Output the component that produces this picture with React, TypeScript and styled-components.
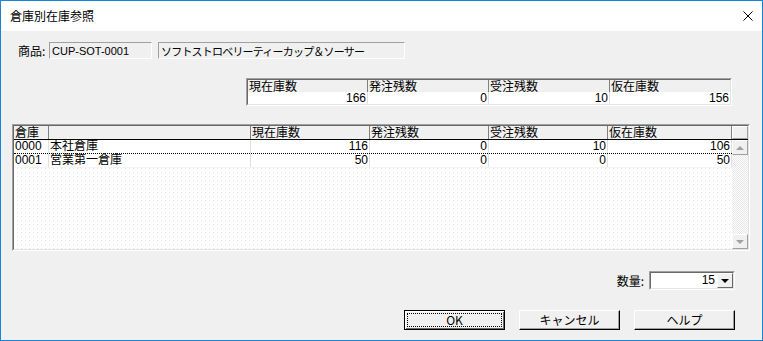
import React from 'react';
import styled, { createGlobalStyle } from 'styled-components';

interface StockRow {
  code: string;
  name: string;
  onHand: number;
  ordered: number;
  reserved: number;
  available: number;
}

const rows: StockRow[] = [
  { code: '0000', name: '本社倉庫', onHand: 116, ordered: 0, reserved: 10, available: 106 },
  { code: '0001', name: '営業第一倉庫', onHand: 50, ordered: 0, reserved: 0, available: 50 },
];

const summary = [
  { label: '現在庫数', value: 166 },
  { label: '発注残数', value: 0 },
  { label: '受注残数', value: 10 },
  { label: '仮在庫数', value: 156 },
];

const GlobalStyle = createGlobalStyle`
  html, body {
    margin: 0;
    padding: 0;
    background: #fff;
  }
  body {
    font-family: "Liberation Sans", "Noto Sans CJK JP", sans-serif;
    font-size: 12px;
    color: #000;
  }
  * {
    box-sizing: border-box;
  }
`;

const Window = styled.div`
  width: 763px;
  height: 341px;
  border: 1px solid #1883d7;
  display: flex;
  flex-direction: column;
  background: #f0f0f0;
  overflow: hidden;
`;

const TitleBar = styled.div`
  height: 30px;
  flex-shrink: 0;
  background: #fff;
  display: flex;
  align-items: center;
  justify-content: space-between;
  padding: 0 9px 0 9px;
`;

const Title = styled.span`
  font-family: "Noto Sans CJK JP", sans-serif;
  font-size: 12px;
  line-height: 14px;
`;

const Body = styled.div`
  flex: 1;
  display: flex;
  flex-direction: column;
  padding: 11px 11px 0 11px;
`;

const ProductRow = styled.div`
  display: flex;
  align-items: center;
  gap: 6px;
  padding-left: 6px;
  height: 17px;
`;

const Label = styled.span<{ $width?: number }>`
  width: ${p => (p.$width ? `${p.$width}px` : 'auto')};
  font-family: "Noto Sans CJK JP", sans-serif;
  font-size: 12px;
  line-height: 14px;
  white-space: nowrap;
`;

const ReadOnlyField = styled.div<{ $width: number; $cjk?: boolean }>`
  width: ${p => p.$width}px;
  height: 17px;
  border: 1px solid;
  border-color: #a0a0a0 #fff #fff #a0a0a0;
  padding: 0 2px;
  display: flex;
  align-items: center;
  font-family: ${p => (p.$cjk ? '"Noto Sans CJK JP", sans-serif' : '"Liberation Sans", sans-serif')};
  font-size: 11px;
  letter-spacing: ${p => (p.$cjk ? '-0.8px' : '0')};
  white-space: nowrap;
`;

const Sunken = styled.div<{ $width: number; $height: number; $left?: number; $top: number }>`
  width: ${p => p.$width}px;
  height: ${p => p.$height}px;
  margin-left: ${p => p.$left ?? 0}px;
  margin-top: ${p => p.$top}px;
  flex-shrink: 0;
  border: 1px solid;
  border-color: #a0a0a0 #fff #fff #a0a0a0;
  display: flex;
`;

const SunkenInner = styled.div`
  flex: 1;
  display: flex;
  flex-direction: column;
  border: 1px solid;
  border-color: #696969 #e3e3e3 #e3e3e3 #696969;
  background: #fff;
`;

const SummaryGrid = styled.div`
  display: grid;
  grid-template-columns: 120px 121px 121px 120px;
  grid-template-rows: 12px 12px;
  font-family: "Noto Sans CJK JP", sans-serif;
  line-height: 12px;
`;

const HeadCell = styled.div<{ $last?: boolean }>`
  background: #f0f0f0;
  border-right: ${p => (p.$last ? 'none' : '1px solid #808080')};
  padding-left: 1px;
  font-family: "Noto Sans CJK JP", sans-serif;
  font-size: 12px;
  line-height: 12px;
  white-space: nowrap;
`;

const NumCell = styled.div<{ $last?: boolean }>`
  background: #fff;
  border-right: ${p => (p.$last ? 'none' : '1px solid #e0e0e0')};
  padding-right: 1px;
  text-align: right;
  font-family: "Liberation Sans", sans-serif;
  font-size: 12px;
  line-height: 12px;
`;

const TextCell = styled.div`
  background: #fff;
  border-right: 1px solid #e0e0e0;
  padding-left: 1px;
  font-family: "Liberation Sans", "Noto Sans CJK JP", sans-serif;
  font-size: 12px;
  line-height: 12px;
  white-space: nowrap;
`;

const cols = '35px 202px 119px 119px 119px 124px';

const GridHeader = styled.div`
  display: grid;
  grid-template-columns: ${cols} 16px;
  height: 14px;
  border-bottom: 1px solid #000;
`;

const ScrollCorner = styled.div`
  background: #f0f0f0;
  border: 1px solid;
  border-color: #fff #a0a0a0 #a0a0a0 #fff;
`;

const GridBody = styled.div`
  flex: 1;
  display: flex;
  min-height: 0;
`;

const RowsArea = styled.div`
  flex: 1;
  display: flex;
  flex-direction: column;
  background:
    linear-gradient(90deg, #fff 75%, transparent 75%) 0 0 / 4px 4px,
    linear-gradient(#e2e2e2 25%, #fff 25%) 0 0 / 4px 4px;
`;

const DataRow = styled.div<{ $focused?: boolean }>`
  display: grid;
  grid-template-columns: ${cols};
  height: 14px;
  align-items: end;
  border-bottom: 1px ${p => (p.$focused ? 'dotted #000' : 'solid #f4f4f4')};
  & > div {
    height: 13px;
  }
`;

const ScrollBar = styled.div`
  width: 16px;
  display: flex;
  flex-direction: column;
  background: repeating-conic-gradient(#fff 0 25%, #e6e6e6 0 50%) 0 0 / 2px 2px;
`;

const ScrollButton = styled.div`
  height: 15px;
  background: #f0f0f0;
  border: 1px solid;
  border-color: #fff #a0a0a0 #a0a0a0 #fff;
  display: flex;
  align-items: center;
  justify-content: center;
`;

const ScrollTrack = styled.div`
  flex: 1;
`;

const Arrow = styled.div<{ $up?: boolean; $color: string }>`
  width: 0;
  height: 0;
  border-left: 4px solid transparent;
  border-right: 4px solid transparent;
  ${p =>
    p.$up
      ? `border-bottom: 4px solid ${p.$color};`
      : `border-top: 4px solid ${p.$color};`}
`;

const QtyRow = styled.div`
  margin-top: 20px;
  display: flex;
  justify-content: flex-end;
  align-items: center;
  gap: 5px;
  padding-right: 16px;
`;

const Combo = styled.div`
  width: 86px;
  height: 19px;
  border: 1px solid;
  border-color: #a0a0a0 #fff #fff #a0a0a0;
  display: flex;
`;

const ComboInner = styled.div`
  flex: 1;
  display: flex;
  background: #fff;
  border: 1px solid;
  border-color: #696969 #e3e3e3 #e3e3e3 #696969;
`;

const ComboValue = styled.div`
  flex: 1;
  text-align: right;
  padding-right: 2px;
  font-family: "Liberation Sans", sans-serif;
  font-size: 12px;
  line-height: 15px;
`;

const ComboButton = styled.div`
  width: 16px;
  background: #f0f0f0;
  border: 1px solid;
  border-color: #fff #696969 #696969 #fff;
  display: flex;
  align-items: center;
  justify-content: center;
`;

const ButtonRow = styled.div`
  margin-top: 20px;
  display: flex;
  justify-content: flex-end;
  gap: 14px;
  padding-right: 16px;
`;

const Button = styled.button<{ $default?: boolean }>`
  width: 101px;
  height: 20px;
  padding: 2px;
  margin: 0;
  display: flex;
  background: #f0f0f0;
  border: 1px solid;
  border-color: ${p => (p.$default ? '#000' : '#fff #000 #000 #fff')};
  box-shadow: ${p =>
    p.$default
      ? 'inset 1px 1px #fff, inset -1px -1px #696969'
      : 'inset -1px -1px #a0a0a0'};
  font-family: "Noto Sans CJK JP", sans-serif;
  font-size: 12px;
  color: #000;
`;

const ButtonFace = styled.span<{ $focus?: boolean }>`
  flex: 1;
  display: flex;
  align-items: center;
  justify-content: center;
  border: 1px ${p => (p.$focus ? 'dotted #000' : 'solid transparent')};
  line-height: 12px;
`;

const CloseIcon = () => (
  <svg width="10" height="10" viewBox="0 0 10 10">
    <path d="M0.5 0.5 L9.5 9.5 M9.5 0.5 L0.5 9.5" stroke="#000" strokeWidth="1" />
  </svg>
);

export default function App() {
  return (
    <>
      <GlobalStyle />
      <Window>
        <TitleBar>
          <Title>倉庫別在庫参照</Title>
          <CloseIcon />
        </TitleBar>
        <Body>
          <ProductRow>
            <Label $width={25}>商品:</Label>
            <ReadOnlyField $width={103}>CUP-SOT-0001</ReadOnlyField>
            <ReadOnlyField $width={247} $cjk>
              ソフトストロベリーティーカップ＆ソーサー
            </ReadOnlyField>
          </ProductRow>

          <Sunken $width={486} $height={28} $left={234} $top={19}>
            <SunkenInner>
              <SummaryGrid>
                {summary.map((s, i) => (
                  <HeadCell key={s.label} $last={i === summary.length - 1}>
                    {s.label}
                  </HeadCell>
                ))}
                {summary.map((s, i) => (
                  <NumCell key={s.label} $last={i === summary.length - 1}>
                    {s.value}
                  </NumCell>
                ))}
              </SummaryGrid>
            </SunkenInner>
          </Sunken>

          <Sunken $width={738} $height={127} $top={18}>
            <SunkenInner>
              <GridHeader>
                <HeadCell>倉庫</HeadCell>
                <HeadCell />
                <HeadCell>現在庫数</HeadCell>
                <HeadCell>発注残数</HeadCell>
                <HeadCell>受注残数</HeadCell>
                <HeadCell>仮在庫数</HeadCell>
                <ScrollCorner />
              </GridHeader>
              <GridBody>
                <RowsArea>
                  {rows.map((r, i) => (
                    <DataRow key={r.code} $focused={i === 0}>
                      <TextCell>{r.code}</TextCell>
                      <TextCell>{r.name}</TextCell>
                      <NumCell>{r.onHand}</NumCell>
                      <NumCell>{r.ordered}</NumCell>
                      <NumCell>{r.reserved}</NumCell>
                      <NumCell>{r.available}</NumCell>
                    </DataRow>
                  ))}
                </RowsArea>
                <ScrollBar>
                  <ScrollButton>
                    <Arrow $up $color="#a0a0a0" />
                  </ScrollButton>
                  <ScrollTrack />
                  <ScrollButton>
                    <Arrow $color="#a0a0a0" />
                  </ScrollButton>
                </ScrollBar>
              </GridBody>
            </SunkenInner>
          </Sunken>

          <QtyRow>
            <Label>数量:</Label>
            <Combo>
              <ComboInner>
                <ComboValue>15</ComboValue>
                <ComboButton>
                  <Arrow $color="#000" />
                </ComboButton>
              </ComboInner>
            </Combo>
          </QtyRow>

          <ButtonRow>
            <Button type="button" $default>
              <ButtonFace $focus>OK</ButtonFace>
            </Button>
            <Button type="button">
              <ButtonFace>キャンセル</ButtonFace>
            </Button>
            <Button type="button">
              <ButtonFace>ヘルプ</ButtonFace>
            </Button>
          </ButtonRow>
        </Body>
      </Window>
    </>
  );
}
